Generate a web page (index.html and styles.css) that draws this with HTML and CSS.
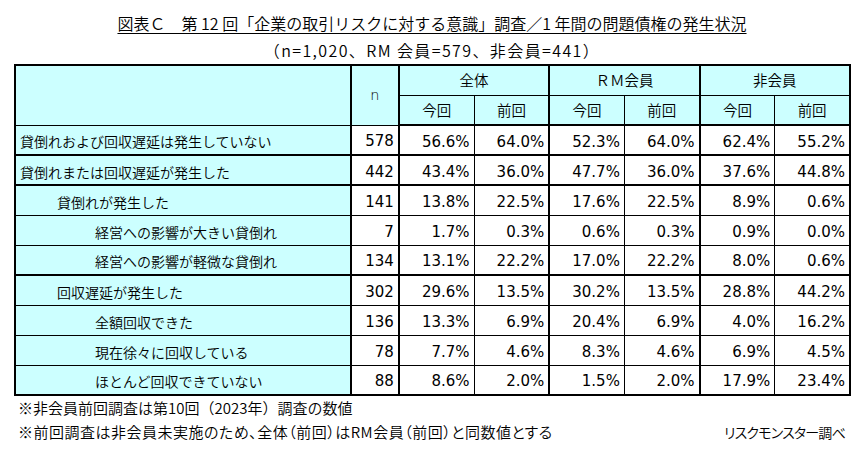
FILE: index.html
```html
<!DOCTYPE html>
<html lang="ja">
<head>
<meta charset="utf-8">
<title>図表C</title>
<link rel="stylesheet" href="styles.css">
</head>
<body>
<div class="page">
  <h1 class="title"><span class="title-text">図表Ｃ　第 12 回「企業の取引リスクに対する意識」調査／1 年間の問題債権の発生状況</span></h1>
  <p class="subtitle">（n=1,020、RM 会員=579、非会員=441）</p>
  <table class="data">
    <colgroup>
      <col class="c-label"><col class="c-n"><col class="c-v"><col class="c-v"><col class="c-v"><col class="c-v"><col class="c-v"><col class="c-v">
    </colgroup>
    <thead>
      <tr class="hr1">
        <th rowspan="2" class="h-label"></th>
        <th rowspan="2" class="h-n">n</th>
        <th colspan="2" class="h-grp">全体</th>
        <th colspan="2" class="h-grp">ＲＭ会員</th>
        <th colspan="2" class="h-grp">非会員</th>
      </tr>
      <tr class="hr2">
        <th class="h-sub sep">今回</th><th class="h-sub">前回</th>
        <th class="h-sub sep">今回</th><th class="h-sub">前回</th>
        <th class="h-sub sep">今回</th><th class="h-sub">前回</th>
      </tr>
    </thead>
    <tbody>
      <tr class="grp-end">
        <td class="lab l0">貸倒れおよび回収遅延は発生していない</td><td>578</td><td>56.6%</td><td>64.0%</td><td>52.3%</td><td>64.0%</td><td>62.4%</td><td>55.2%</td>
      </tr>
      <tr class="grp-end">
        <td class="lab l0">貸倒れまたは回収遅延が発生した</td><td>442</td><td>43.4%</td><td>36.0%</td><td>47.7%</td><td>36.0%</td><td>37.6%</td><td>44.8%</td>
      </tr>
      <tr>
        <td class="lab l1">貸倒れが発生した</td><td>141</td><td>13.8%</td><td>22.5%</td><td>17.6%</td><td>22.5%</td><td>8.9%</td><td>0.6%</td>
      </tr>
      <tr>
        <td class="lab l2">経営への影響が大きい貸倒れ</td><td>7</td><td>1.7%</td><td>0.3%</td><td>0.6%</td><td>0.3%</td><td>0.9%</td><td>0.0%</td>
      </tr>
      <tr class="grp-end">
        <td class="lab l2">経営への影響が軽微な貸倒れ</td><td>134</td><td>13.1%</td><td>22.2%</td><td>17.0%</td><td>22.2%</td><td>8.0%</td><td>0.6%</td>
      </tr>
      <tr>
        <td class="lab l1">回収遅延が発生した</td><td>302</td><td>29.6%</td><td>13.5%</td><td>30.2%</td><td>13.5%</td><td>28.8%</td><td>44.2%</td>
      </tr>
      <tr>
        <td class="lab l2">全額回収できた</td><td>136</td><td>13.3%</td><td>6.9%</td><td>20.4%</td><td>6.9%</td><td>4.0%</td><td>16.2%</td>
      </tr>
      <tr>
        <td class="lab l2">現在徐々に回収している</td><td>78</td><td>7.7%</td><td>4.6%</td><td>8.3%</td><td>4.6%</td><td>6.9%</td><td>4.5%</td>
      </tr>
      <tr>
        <td class="lab l2">ほとんど回収できていない</td><td>88</td><td>8.6%</td><td>2.0%</td><td>1.5%</td><td>2.0%</td><td>17.9%</td><td>23.4%</td>
      </tr>
    </tbody>
  </table>
  <div class="notes">
    <p class="note">※非会員前回調査は第10回（2023年）調査の数値</p>
    <div class="note-row">
      <p class="note note-2">※前回調査は非会員未実施のため、全体（前回）はRM会員（前回）と同数値とする</p>
      <p class="note source">リスクモンスター調べ</p>
    </div>
  </div>
</div>
</body>
</html>
```

FILE: styles.css
```css
* { box-sizing: border-box; }
html, body { margin: 0; padding: 0; background: #fff; }
body {
  font-family: "Noto Sans CJK JP", sans-serif;
  font-weight: 350;
  color: #000;
  width: 864px;
  height: 455px;
  overflow: hidden;
}
.page { width: 864px; }

.title {
  margin: 0;
  padding-top: 12px;
  font-size: 16px;
  font-weight: 350;
  line-height: 22px;
  text-align: center;
}
.title-text {
  text-decoration: underline;
  text-decoration-thickness: 1px;
  text-underline-offset: 3px;
}
.subtitle {
  margin: 5px 0 0;
  font-size: 16px;
  letter-spacing: 1.4px;
  line-height: 22px;
  text-align: center;
}

.data {
  margin: 3px 0 0 14px;
  border-collapse: collapse;
  table-layout: fixed;
  width: 837px;
  border: 2px solid #000;
}
.c-label { width: 335px; }
.c-n { width: 48px; }
.c-v { width: 75px; }

.data th, .data td {
  border: 1px solid #000;
  height: 30px;
  padding: 0;
  overflow: hidden;
  white-space: nowrap;
}
.data th {
  background: #ccffff;
  font-weight: 350;
  font-size: 14.5px;
  text-align: center;
  line-height: 18px;
}
.h-label, .h-n { border-right: 2px solid #000 !important; }
.h-grp { border-right: 2px solid #000 !important; }
.h-sub.sep { border-left: 2px solid #000 !important; }
.h-n {
  font-family: "DejaVu Sans", sans-serif;
  font-weight: normal;
  font-size: 16px;
  padding-top: 2px;
}
.hr2 th { border-bottom: 2px solid #000; }

.data td {
  font-family: "DejaVu Sans", "Noto Sans CJK JP", sans-serif;
  font-weight: normal;
  font-size: 15px;
  text-align: right;
  padding: 3px 4px 0 0;
  line-height: 18px;
}
.data td:nth-child(1),
.data td:nth-child(2),
.data td:nth-child(3),
.data td:nth-child(5),
.data td:nth-child(7) { border-left: 2px solid #000; }

.data td.lab {
  background: #ccffff;
  font-family: "Noto Sans CJK JP", sans-serif;
  font-weight: 350;
  font-size: 14px;
  text-align: left;
  padding-right: 0;
}
.l0 { padding-left: 4px !important; }
.l1 { padding-left: 41px !important; }
.l2 { padding-left: 79px !important; }

.grp-end td { border-bottom: 2px solid #000; }

.notes {
  margin-top: 0;
  padding: 0 19px 0 18px;
  font-size: 15px;
  line-height: 24px;
}
.note { margin: 0; }
.note-2 { font-feature-settings: "palt"; letter-spacing: 0.5px; }
.note-row {
  display: flex;
  justify-content: space-between;
}
.source {
  font-size: 14px;
  font-feature-settings: "palt";
  letter-spacing: -0.8px;
}
```
